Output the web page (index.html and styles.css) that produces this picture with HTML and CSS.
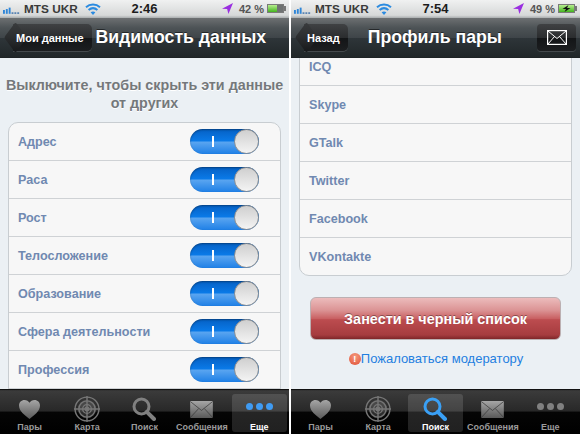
FILE: index.html
```html
<!DOCTYPE html>
<html lang="ru">
<head>
<meta charset="utf-8">
<title>Screens</title>
<link rel="stylesheet" href="styles.css">
</head>
<body>
<svg class="defs" width="0" height="0" aria-hidden="true">
  <defs>
    <linearGradient id="grayIcon" x1="0" y1="0" x2="0" y2="1"><stop offset="0" stop-color="#a6a6a6"/><stop offset="1" stop-color="#595959"/></linearGradient>
    <symbol id="signal" viewBox="0 0 20 8"><rect x="0" y="4" width="2" height="4" fill="#2f86d8"/><rect x="3" y="3" width="2" height="5" fill="#2f86d8"/><rect x="6" y="1.5" width="2" height="6.5" fill="#2f86d8"/><rect x="9" y="6.5" width="2" height="1.5" fill="#3c6fa8"/><rect x="12" y="6.5" width="2" height="1.5" fill="#3c6fa8"/><rect x="15" y="6.5" width="2" height="1.5" fill="#3c6fa8"/></symbol>
    <symbol id="wifi" viewBox="0 0 16 12"><path d="M1 4.2C5 .6 11 .6 15 4.2" fill="none" stroke="#2b8be0" stroke-width="2"/><path d="M3.6 7C6.2 4.8 9.8 4.8 12.4 7" fill="none" stroke="#2b8be0" stroke-width="2"/><path d="M8 12 5.6 9.2C7 8.2 9 8.2 10.4 9.2Z" fill="#2b8be0"/></symbol>
    <symbol id="arrow" viewBox="0 0 12 12"><path d="M12 0 0 6.2 5.6 6.6 7 12Z" fill="#9a2fe0"/></symbol>
    <symbol id="bolt" viewBox="0 0 12 7"><path d="M8 0 2 4H5.500L4 7 10 3H6.500Z" fill="#111"/></symbol>
    <symbol id="heart" viewBox="0 0 24 22"><path d="M12 21C7 17 1 12.500 1 6.800 1 3.400 3.600 1 6.700 1 9 1 11 2.200 12 4 13 2.200 15 1 17.300 1 20.400 1 23 3.400 23 6.800 23 12.500 17 17 12 21Z"/></symbol>
    <symbol id="radar" viewBox="0 0 24 24"><g fill="none" stroke-width="1.300"><circle cx="12" cy="12" r="11"/><circle cx="12" cy="12" r="7.500"/><circle cx="12" cy="12" r="4"/><path d="M12 0V24M0 12H24"/></g><circle cx="12" cy="12" r="8" opacity=".35"/><circle cx="12" cy="12" r="1.800"/></symbol>
    <symbol id="loupe" viewBox="0 0 24 24"><circle cx="9.500" cy="9.500" r="7.500" fill="none" stroke-width="3"/><path d="M14.800 14.800 22 22" fill="none" stroke-width="4" stroke-linecap="round"/></symbol>
    <symbol id="envelope" viewBox="0 0 24 18"><rect width="24" height="18" rx="1"/><path d="M.5 .8 12 10 23.500 .8M.5 17.200 9 8M23.500 17.200 15 8" fill="none" stroke="#3a3a3a" stroke-width=".8"/></symbol>
    <symbol id="mail" viewBox="0 0 20 15"><rect x=".6" y=".6" width="18.800" height="13.800" fill="none" stroke="#fff" stroke-width="1.200"/><path d="M1 1 10 8.500 19 1M1 14 7.500 6.500M19 14 12.500 6.500" fill="none" stroke="#fff" stroke-width="1"/></symbol>
  </defs>
</svg>
<main class="screens">

  <section class="phone">
    <header class="status">
      <div class="status-left"><svg class="i-signal"><use href="#signal"/></svg><span>MTS UKR</span><svg class="i-wifi"><use href="#wifi"/></svg></div>
      <div class="clock">2:46</div>
      <div class="status-right"><svg class="i-arrow"><use href="#arrow"/></svg><span class="pct">42 %</span><span class="battery"><span class="charge charge-42"></span></span></div>
    </header>
    <nav class="navbar">
      <a class="back"><span class="back-label">Мои данные</span></a>
      <h1 class="title">Видимость данных</h1>
    </nav>
    <div class="content">
      <p class="hint">Выключите, чтобы скрыть эти данные от других</p>
      <ul class="group">
        <li class="row"><span>Адрес</span><span class="switch"><span class="bar"></span><span class="knob"></span></span></li>
        <li class="row"><span>Раса</span><span class="switch"><span class="bar"></span><span class="knob"></span></span></li>
        <li class="row"><span>Рост</span><span class="switch"><span class="bar"></span><span class="knob"></span></span></li>
        <li class="row"><span>Телосложение</span><span class="switch"><span class="bar"></span><span class="knob"></span></span></li>
        <li class="row"><span>Образование</span><span class="switch"><span class="bar"></span><span class="knob"></span></span></li>
        <li class="row"><span>Сфера деятельности</span><span class="switch"><span class="bar"></span><span class="knob"></span></span></li>
        <li class="row"><span>Профессия</span><span class="switch"><span class="bar"></span><span class="knob"></span></span></li>
        <li class="row"></li>
      </ul>
    </div>
    <footer class="tabbar">
      <div class="tab"><svg class="ti ti-heart gray"><use href="#heart"/></svg><span>Пары</span></div>
      <div class="tab"><svg class="ti ti-radar gray-radar"><use href="#radar"/></svg><span>Карта</span></div>
      <div class="tab"><svg class="ti ti-loupe gray-line"><use href="#loupe"/></svg><span>Поиск</span></div>
      <div class="tab"><svg class="ti ti-env gray"><use href="#envelope"/></svg><span>Сообщения</span></div>
      <div class="tab active"><span class="dots"><i></i><i></i><i></i></span><span>Еще</span></div>
    </footer>
  </section>

  <section class="phone">
    <header class="status">
      <div class="status-left"><svg class="i-signal"><use href="#signal"/></svg><span>MTS UKR</span><svg class="i-wifi"><use href="#wifi"/></svg></div>
      <div class="clock">7:54</div>
      <div class="status-right"><svg class="i-arrow"><use href="#arrow"/></svg><span class="pct">49 %</span><span class="battery"><span class="charge charge-49"><svg class="i-bolt"><use href="#bolt"/></svg></span></span></div>
    </header>
    <nav class="navbar">
      <a class="back"><span class="back-label">Назад</span></a>
      <h1 class="title">Профиль пары</h1>
      <a class="mail-btn"><svg class="i-mail"><use href="#mail"/></svg></a>
    </nav>
    <div class="content">
      <ul class="group scrolled">
        <li class="row"><span>ICQ</span></li>
        <li class="row"><span>Skype</span></li>
        <li class="row"><span>GTalk</span></li>
        <li class="row"><span>Twitter</span></li>
        <li class="row"><span>Facebook</span></li>
        <li class="row"><span>VKontakte</span></li>
      </ul>
      <button class="danger">Занести в черный список</button>
      <p class="report"><span class="warn">!</span><a>Пожаловаться модератору</a></p>
    </div>
    <footer class="tabbar">
      <div class="tab"><svg class="ti ti-heart gray"><use href="#heart"/></svg><span>Пары</span></div>
      <div class="tab"><svg class="ti ti-radar gray-radar"><use href="#radar"/></svg><span>Карта</span></div>
      <div class="tab active"><svg class="ti ti-loupe blue-line"><use href="#loupe"/></svg><span>Поиск</span></div>
      <div class="tab"><svg class="ti ti-env gray"><use href="#envelope"/></svg><span>Сообщения</span></div>
      <div class="tab"><span class="dots off"><i></i><i></i><i></i></span><span>Еще</span></div>
    </footer>
  </section>

</main>
</body>
</html>
```
FILE: styles.css
```css
* { box-sizing: border-box; }
html, body { margin: 0; padding: 0; background: #fff; }
body { width: 580px; height: 434px; overflow: hidden; font-family: "Liberation Sans", Arial, sans-serif; }
.defs { display: block; height: 0; width: 0; }
.screens { display: flex; gap: 2px; height: 434px; }
.phone { width: 289px; height: 434px; display: flex; flex-direction: column; background: #ebf0f4; overflow: hidden; }

.status { position: relative; flex: none; height: 18px; display: flex; align-items: center; justify-content: space-between; padding: 0 5px 1px 3px; background: linear-gradient(#f0f1f1, #d6d8d8 85%, #a9adae); color: #333; font-size: 11.800px; font-weight: 700; }
.status-left { display: flex; align-items: center; gap: 2px; }
.status-left span { color: #3a3a3a; }
.i-signal { width: 19px; height: 8px; margin-top: 2px; }
.i-wifi { width: 16px; height: 12px; margin-left: 5px; }
.clock { position: absolute; left: 0; right: 0; text-align: center; font-size: 13px; color: #1c1c1c; }
.status-right { display: flex; align-items: center; color: #555; font-size: 11.5px; }
.i-arrow { width: 11px; height: 11px; margin-right: 6px; }
.pct { margin-right: 3px; font-size: 11px; }
.battery { position: relative; width: 17px; height: 9px; background: #6f7272; border: 1px solid #7a7a7a; display: block; }
.battery::after { content: ""; position: absolute; right: -3px; top: 1px; width: 2px; height: 5px; background: #777; }
.charge { display: block; height: 100%; background: linear-gradient(#b7ee8f, #44b41f); }
.charge-42 { width: 62%; }
.charge-49 { width: 100%; }
.i-bolt { display: block; width: 15px; height: 7px; }

.navbar { flex: none; height: 40px; display: flex; align-items: center; padding: 0 4px 0 5px; background: linear-gradient(#6d7072 0, #4d5356 25%, #3f4549 50%, #2e3539 52%, #212729 100%); border-bottom: 1px solid #1e2325; }
.back { position: relative; isolation: isolate; flex: none; margin-left: 8px; height: 27px; padding: 0 8px 0 3px; display: flex; align-items: center; border-radius: 0 5px 5px 0; background: linear-gradient(#3f4143, #2b2d2f 50%, #131517 52%, #1c1e20); color: #fff; font-size: 11px; font-weight: 700; white-space: nowrap; box-shadow: 0 1px 0 rgba(255,255,255,.15); }
.back::before { content: ""; position: absolute; z-index: -1; left: -7px; top: 4px; width: 19px; height: 19px; transform: rotate(45deg) skew(8deg, 8deg); background: linear-gradient(135deg, #3a3c3e, #2b2d2f 50%, #16181a); border-radius: 2px; }
.back-label { position: relative; }
.title { flex: 1; margin: 0; padding-right: 15px; text-align: center; color: #fff; font-size: 17.700px; font-weight: 700; white-space: nowrap; text-shadow: 0 -1px 0 rgba(0,0,0,.5); }
.mail-btn { flex: none; width: 39px; height: 27px; display: flex; align-items: center; justify-content: center; border-radius: 4px; background: linear-gradient(#3f4143, #2b2d2f 50%, #131517 52%, #1c1e20); box-shadow: 0 1px 0 rgba(255,255,255,.15); }
.i-mail { width: 20px; height: 15px; }

.content { flex: 1; min-height: 0; overflow: hidden; display: flex; flex-direction: column; }
.hint { margin: 18px 0 0; padding: 0 5px; height: 46px; text-align: center; color: #74787b; font-size: 14.300px; font-weight: 700; line-height: 18px; text-shadow: 0 1px 0 #fff; flex: none; }
.group { flex: none; list-style: none; margin: 0 8px; padding: 0; background: #f7f7f7; border: 1px solid #c8cdd1; border-radius: 10px; }
.group.scrolled { margin-top: -11px; }
.row { height: 38px; display: flex; align-items: center; justify-content: space-between; padding: 0 21px 0 9px; border-bottom: 1px solid #cfd2d5; color: #7089b1; font-size: 12.600px; font-weight: 700; }
.row:last-child { border-bottom: 0; height: 37px; }

.switch { position: relative; width: 69px; height: 25px; border-radius: 13px; background: linear-gradient(#0560c4, #0a7ae8 48%, #5aa5f0 52%, #1f80e6 100%); box-shadow: inset 0 1px 2px rgba(0,0,0,.35); display: block; }
.bar { position: absolute; left: 22px; top: 7px; width: 2px; height: 11px; background: #fff; }
.knob { position: absolute; right: 0; top: 0; width: 25px; height: 25px; border-radius: 50%; background: linear-gradient(#cfcfcf, #f4f4f4); border: 1px solid #8d8f91; }

.danger { flex: none; display: block; margin: 21px 0 0 19px; width: 251px; height: 43px; border: 1px solid #bcb0b2; border-radius: 6px; background: linear-gradient(#ecbcbc 0, #db9394 30%, #c96163 50%, #bc4c4f 53%, #a63c3f 90%, #7e2629 100%); color: #fff; font-family: inherit; font-size: 14.400px; font-weight: 700; text-shadow: 0 -1px 0 rgba(0,0,0,.35); padding: 0; }
.report { flex: none; margin: 11px 0 0; display: flex; align-items: center; justify-content: center; font-size: 13px; color: #1f7fe0; height: 15px; padding-left: 1px; }
.warn { width: 12px; height: 12px; border-radius: 50%; background: radial-gradient(circle at 50% 30%, #f59a7e, #e04f35); color: #fff; font-size: 9px; font-weight: 700; line-height: 12px; text-align: center; display: block; }

.tabbar { flex: none; height: 45px; display: grid; grid-template-columns: repeat(5, 1fr); padding: 4px 1px 2px; background: linear-gradient(#2c2c2c 0, #3b3b3b 2%, #282828 48%, #050505 50%, #000 100%); border-top: 1px solid #111; }
.tab { min-width: 0; margin: 0 1px; display: flex; flex-direction: column; align-items: center; justify-content: flex-end; gap: 2px; border-radius: 3px; color: #9b9b9b; font-size: 9px; font-weight: 700; white-space: nowrap; line-height: 10px; }
.tab.active { background: rgba(255,255,255,.13); color: #fff; }
.ti { display: block; }
.ti-heart { width: 23px; height: 21px; }
.ti-radar { width: 26px; height: 26px; margin-bottom: -2px; }
.ti-loupe { width: 24px; height: 24px; margin-bottom: -1px; }
.ti-env { width: 23px; height: 17px; margin-bottom: 2px; }
.gray { fill: url(#grayIcon); }
.gray-radar { fill: #777; stroke: #777; }
.gray-line { stroke: #808080; }
.blue-line { stroke: #3aa0f5; }
.dots { display: flex; gap: 3px; height: 7px; margin-bottom: 10px; }
.dots i { display: block; width: 7px; height: 7px; border-radius: 50%; background: #3f9bf3; }
.dots.off i { background: #808080; }
```
